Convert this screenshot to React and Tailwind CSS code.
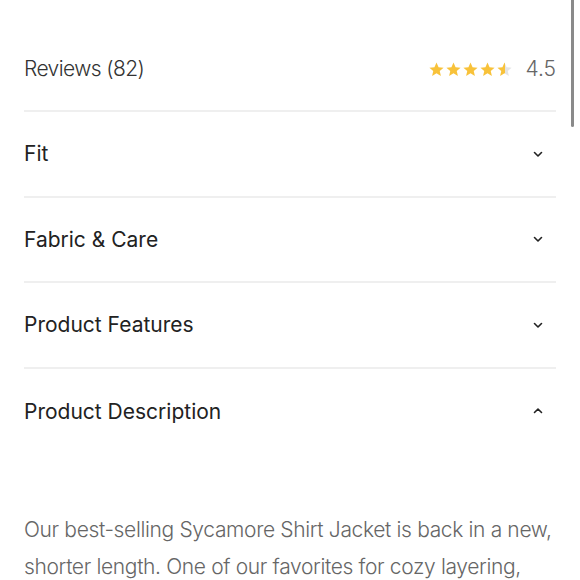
import React from "react";

const font = { fontFamily: "Inter, 'Noto Sans', sans-serif" };

function Star({ fill = 1, id }) {
  return (
    <svg width="17" height="17" viewBox="0 0 24 24">
      <defs>
        <linearGradient id={id}>
          <stop offset={fill} stopColor="#f8c23a" />
          <stop offset={fill} stopColor="#e4e4e4" />
        </linearGradient>
      </defs>
      <path
        d="M12 2.2l2.9 6.6 7.1.6-5.4 4.7 1.6 7-6.2-3.7-6.2 3.7 1.6-7L2 9.4l7.1-.6z"
        fill={`url(#${id})`}
      />
    </svg>
  );
}

function Chevron({ up }) {
  return (
    <svg width="12" height="12" viewBox="0 0 12 12" className="text-[#222]">
      <path
        d={up ? "M2.5 7.5L6 4l3.5 3.5" : "M2.5 4.5L6 8l3.5-3.5"}
        fill="none"
        stroke="currentColor"
        strokeWidth="1.6"
        strokeLinecap="round"
        strokeLinejoin="round"
      />
    </svg>
  );
}

const sections = [
  { title: "Fit" },
  { title: "Fabric & Care" },
  { title: "Product Features" },
  { title: "Product Description", open: true },
];

export default function App() {
  return (
    <div className="relative h-[580px] w-[580px] overflow-hidden bg-white" style={font}>
      {/* scrollbar */}
      <div className="absolute right-[6px] top-0 h-[127px] w-[3px] rounded-b-full bg-[#8a8a8a]" />

      <div className="px-6 pt-[28px]">
        <div className="flex h-[84px] items-center justify-between border-b-2 border-[#efefef]">
          <span className="text-[21px] font-light tracking-[-0.6px] text-[#333]">Reviews (82)</span>
          <div className="flex items-center">
            <div className="flex">
              {[1, 1, 1, 1, 0.5].map((f, i) => (
                <Star key={i} fill={f} id={"star" + i} />
              ))}
            </div>
            <span className="ml-3 text-[21px] font-light text-[#666]">4.5</span>
          </div>
        </div>

        {sections.map((s, i) => (
          <div
            key={s.title}
            className={
              "flex h-[85.5px] items-center justify-between " +
              (i < sections.length - 1 ? "border-b-2 border-[#efefef]" : "")
            }
          >
            <span className="text-[21px] font-normal text-[#222]">{s.title}</span>
            <div className="mr-3">
              <Chevron up={s.open} />
            </div>
          </div>
        ))}

        <p className="mt-[57px] text-[21px] font-light leading-[37px] tracking-[-0.35px] text-[#666]">
          Our best-selling Sycamore Shirt Jacket is back in a new, shorter length. One of our
          favorites for cozy layering, crafted from a soft brushed flannel.
        </p>
      </div>
    </div>
  );
}
